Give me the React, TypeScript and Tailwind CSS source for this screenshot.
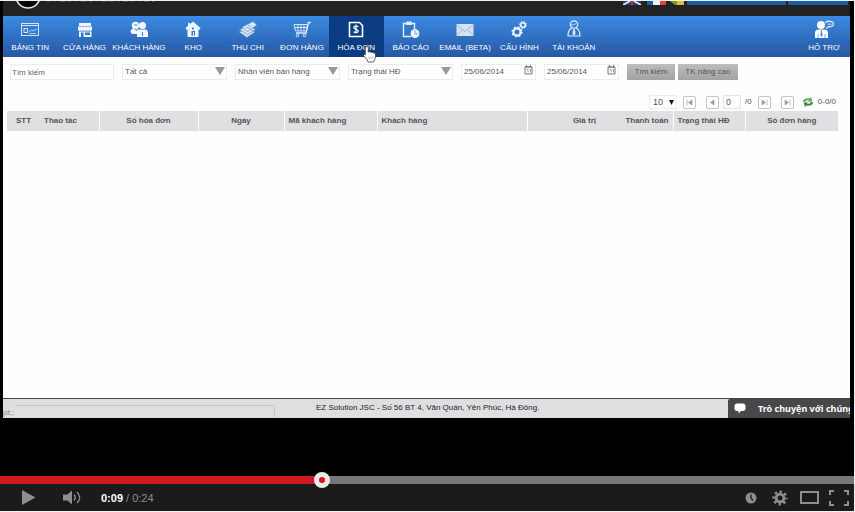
import { useState } from "react";
import type { ReactNode } from "react";
import { clsx } from "clsx";

type NavEntry = { label: string; icon: ReactNode };

const NAV_ITEMS: NavEntry[] = [
  {
    label: "BẢNG TIN",
    icon: (
      <g fill="none" stroke="#d5e6fa">
        <rect x="1.5" y="3.5" width="17" height="12" />
        <path d="M1.5 5.5h17" />
        <rect x="4" y="8.5" width="3.5" height="4" />
        <path d="M9 12l2-2 2 1 4-2M9 13.5h7" strokeWidth="0.8" />
      </g>
    ),
  },
  {
    label: "CỬA HÀNG",
    icon: (
      <g fill="#eef5fd">
        <path d="M4 3h12v3H4zM3 6.5h14v3.2a1.4 1.4 0 0 1-2.8 0 1.4 1.4 0 0 1-2.8 0 1.4 1.4 0 0 1-2.8 0 1.4 1.4 0 0 1-2.8 0 1.4 1.4 0 0 1-2.8 0z" />
        <path fillRule="evenodd" d="M4 11.5h12.5V17H4zM6 12.5V17h2.5v-4.5zM10 12.5V15h5v-2.5z" />
      </g>
    ),
  },
  {
    label: "KHÁCH HÀNG",
    icon: (
      <g fill="#f4f8fe">
        <circle cx="6.5" cy="5.5" r="3.7" />
        <path d="M1.5 12c0-2.500 1.500-3.500 4.500-3.500s4 1.500 4 3.500v2H3z" />
        <circle cx="13.5" cy="5.5" r="3.5" />
        <path d="M9.5 9.5h6.5c2.500 0 3 2 3 4V17H8v-3.500z" />
        <path d="M5 5h3.500M6 9l2.500 1.500M13.500 12v4" fill="none" stroke="#4389dc" strokeWidth="1.2" />
      </g>
    ),
  },
  {
    label: "KHO",
    icon: (
      <g fill="#eef5fd">
        <path fillRule="evenodd" d="M10 1.5l7.5 6.5-1 2-1-.7V17H4.5V9.3l-1 .7-1-2L5 5.8V3h2v1.2zM8.5 11v4.500h3.500V11z" />
        <path d="M9 7.500h2v2H9z" fill="#3f86dc" />
        <path d="M10 12h1v3.5h-1z" />
      </g>
    ),
  },
  {
    label: "THU CHI",
    icon: (
      <g fill="#d9e6f5" stroke="#5c86bd" strokeWidth="0.7">
        <path d="M1 12l9-4 7 4-8 5.5z" />
        <path d="M1.5 9.5l9-4 7 4-8 5z" />
        <path d="M4 7l11-5.5L19 5 9.5 11.5z" />
        <path d="M8 7l4 1.5M10 5l3 2M12 9l3 2" fill="none" stroke="#6f94c2" />
      </g>
    ),
  },
  {
    label: "ĐƠN HÀNG",
    icon: (
      <g fill="none" stroke="#e2edfb">
        <path d="M19 2.5h-2.5L14 13H4" strokeWidth="1.4" />
        <path d="M2 4.5h13.5L14.5 11H3.5zM6 4.5V11M9 4.5V11M12 4.5V11M2.5 7.5H15" strokeWidth="0.9" />
        <circle cx="5.5" cy="15.5" r="1.3" />
        <circle cx="12.5" cy="15.5" r="1.3" />
      </g>
    ),
  },
  {
    label: "HÓA ĐƠN",
    icon: (
      <g fill="none" stroke="#fff">
        <path d="M3.5 2.500h10l3 3v11h-13z" strokeWidth="1.6" />
        <path d="M12.300 7c-1-1.300-4.600-1.300-4.600.600 0 2.200 4.600 1.200 4.600 3.500 0 2-3.700 1.900-4.800.500M10 4.500v9" strokeWidth="1.2" />
      </g>
    ),
  },
  {
    label: "BÁO CÁO",
    icon: (
      <g fill="none" stroke="#e2edfb">
        <path d="M10 16.5H2.5v-13h11V9" strokeWidth="1.4" />
        <path d="M5.5 2h5v2.5h-5z" fill="#e2edfb" />
        <circle cx="14" cy="13.5" r="4" fill="#f4f8fe" stroke="#f4f8fe" />
        <path d="M14 10v3.5h3.5M14 13.5l2 2" stroke="#6c9fdf" strokeWidth="0.8" />
      </g>
    ),
  },
  {
    label: "EMAIL (BETA)",
    icon: (
      <g>
        <path d="M1.500 4h17v12h-17z" fill="#d6e2f0" />
        <path d="M1.500 4.500l8.500 7 8.500-7M1.500 15.500l6-6M18.500 15.500l-6-6" fill="none" stroke="#94b0d2" strokeWidth="0.9" />
      </g>
    ),
  },
  {
    label: "CẤU HÌNH",
    icon: (
      <g fill="none" stroke="#f4f8fe">
        <circle cx="8" cy="12" r="3.6" strokeWidth="2.2" />
        <circle cx="8" cy="12" r="5" strokeWidth="1.2" strokeDasharray="1.96 1.96" />
        <circle cx="14" cy="5" r="2.3" strokeWidth="1.5" />
        <circle cx="14" cy="5" r="3.5" strokeWidth="1" strokeDasharray="1.37 1.37" />
      </g>
    ),
  },
  {
    label: "TÀI KHOẢN",
    icon: (
      <g fill="none" stroke="#e2edfb" strokeWidth="1.2">
        <circle cx="10" cy="4.5" r="3.7" />
        <path d="M8 8c-3 1-4 3-4 8h12c0-5-1-7-4-8" />
        <path d="M7 5c2 0 4-.5 5.500-2" strokeWidth="0.8" />
        <path d="M9.300 9.500h1.400l.5 4.500-1.200 1.500L8.800 14z" fill="#e2edfb" strokeWidth="0.5" />
      </g>
    ),
  },
];

const SUPPORT: NavEntry = {
  label: "HỖ TRỢ",
  icon: (
    <g fill="#fff">
      <circle cx="7" cy="5" r="4" />
      <path d="M1 18v-5c0-2.500 1.500-3.500 4-3.500h5c2.500 0 4 1 4 3.500v5z" />
      <path d="M7.500 10.500l.7 4.500-.7 1.500-.7-1.500zM4 14v4M11 14v4" stroke="#3a7fd8" strokeWidth="0.7" fill="#3a7fd8" />
      <path d="M11.500 2.500c2-2 8-1.500 8 1.500 0 2-2.500 3-5 2.700L12 8.500" fill="none" stroke="#dbe9fa" strokeWidth="1.3" />
      <path d="M13.500 4.200h4" stroke="#dbe9fa" />
    </g>
  ),
};

const FILTERS = [
  { name: "scope", label: "Tất cả" },
  { name: "staff", label: "Nhân viên bán hàng" },
  { name: "status", label: "Trạng thái HĐ" },
];

const COLUMNS = [
  { label: "STT", className: "w-[33px] text-center" },
  { label: "Thao tác", className: "w-[59px] pl-1 text-left" },
  { label: "Số hóa đơn", className: "w-[99px] border-l border-white text-center" },
  { label: "Ngày", className: "w-[86px] border-l border-white text-center" },
  { label: "Mã khách hàng", className: "w-[93px] border-l border-white pl-1 text-left" },
  { label: "Khách hàng", className: "w-[150px] border-l border-white pl-1 text-left" },
  { label: "Giá trị", className: "w-[73px] border-l border-white pr-1 text-right" },
  { label: "Thanh toán", className: "w-[73px] pr-1 text-right" },
  { label: "Trạng thái HĐ", className: "w-[72px] border-l border-white pl-1 text-left" },
  { label: "Số đơn hàng", className: "border-l border-white text-center" },
];

function NavButton({ item, active, onClick }: { item: NavEntry; active?: boolean; onClick?: () => void }) {
  return (
    <button
      type="button"
      onClick={onClick}
      className={clsx(
        "relative flex h-full w-full flex-col items-center pt-1 text-[8px] leading-[12px] whitespace-nowrap text-white",
        active && "bg-[#0b3c81]"
      )}
    >
      <svg viewBox="0 0 20 20" className="h-5 w-5 shrink-0" aria-hidden="true">
        {item.icon}
      </svg>
      <span className="mt-0.5">{item.label}</span>
      {active && (
        <svg viewBox="0 0 13 17" className="absolute top-[30px] left-[34px] h-[17px] w-[13px]" aria-hidden="true">
          <path
            d="M3.500.500C4.700.500 5.300 1.200 5.300 2.200V6l1.500-.300 1.300.700 1.400-.100 1.100.700c1.300 0 1.900.600 1.900 1.700l-.300 3.500L10.500 16H5L4 13.500.800 10c-.600-1.200.600-2 1.500-1.200V2.200C2.200 1.200 2.600.500 3.500.500z"
            fill="#fff"
            stroke="#3a3a3a"
            strokeWidth="0.8"
          />
          <path d="M6.2 10.500V13M8 10.500V13M9.800 10.500V13" stroke="#777" strokeWidth="0.5" />
        </svg>
      )}
    </button>
  );
}

function TopBar() {
  return (
    <header className="flex h-[15px] items-start justify-between bg-[#222] pr-0.5">
      <svg viewBox="0 0 160 12" className="ml-2 h-3 w-40" aria-hidden="true">
        <circle cx="17" cy="-5" r="12" fill="#050505" stroke="#e8e8e8" strokeWidth="1.6" />
        <path d="M36 .5h108" stroke="#4a4a4a" strokeDasharray="3 5 1 4 5 3" />
      </svg>
      <div className="flex gap-0.5">
        <svg viewBox="0 0 62 4" className="h-1 w-[62px]" aria-hidden="true">
          <path d="M0 0h18v4H0z" fill="#28417f" />
          <path d="M0 4L7 0M18 4L11 0" stroke="#eee" strokeWidth="1.6" />
          <path d="M9 0v4" stroke="#d12c3c" strokeWidth="2.5" />
          <path d="M24 0h6v4h-6z" fill="#2059a7" />
          <path d="M30 0h7v4h-7z" fill="#f3f3f3" />
          <path d="M37 0h6v4h-6z" fill="#e0443a" />
          <path d="M47 0h7l2 4h-4z" fill="#7d9b2c" />
          <path d="M54 0h7v4h-7z" fill="#e6b93d" />
        </svg>
        <button type="button" aria-label="Tài khoản" className="h-1 w-[99px] bg-[#1c5ba6]" />
        <button type="button" aria-label="Thoát" className="h-1 w-[60px] bg-[#1c5ba6]" />
      </div>
    </header>
  );
}

function DateField({ label }: { label: string }) {
  return (
    <label className="flex h-4 w-[75px] items-center border border-[#ececec] bg-white">
      <input
        aria-label={label}
        defaultValue="25/06/2014"
        className="w-full min-w-0 pl-0.5 text-[8px] leading-[12px] text-[#555] outline-none"
      />
      <svg viewBox="0 0 9 10" className="mr-0.5 mb-1 h-[10px] w-[9px] shrink-0" aria-hidden="true">
        <path d="M1 2h7v7H1z" fill="#fff" stroke="#777" />
        <path d="M1 2h7M2.5 0v2M6.5 0v2" stroke="#777" />
        <path d="M2.5 4.5H4v3M5.500 4.500h1v3" fill="none" stroke="#777" strokeWidth="0.7" />
      </svg>
    </label>
  );
}

function FilterBar() {
  return (
    <form className="flex items-center gap-2 pt-[7px] pl-[7px]" onSubmit={(e) => e.preventDefault()}>
      <input
        aria-label="Tìm kiếm"
        placeholder="Tìm kiếm"
        className="h-4 w-[104px] border border-[#ececec] pl-px text-[8px] leading-[12px] text-[#555] outline-none placeholder:text-[#666]"
      />
      {FILTERS.map((filter) => (
        <div key={filter.name} className="relative">
          <select
            name={filter.name}
            aria-label={filter.label}
            className="block h-4 w-[105px] appearance-none border border-[#ececec] bg-white pl-0.5 text-[8px] leading-[12px] text-[#555]"
          >
            <option>{filter.label}</option>
          </select>
          <svg viewBox="0 0 10 8" className="pointer-events-none absolute top-[3px] right-0.5 h-2 w-[10px]" aria-hidden="true">
            <path d="M0 0h10L5 8z" fill="#989898" />
          </svg>
        </div>
      ))}
      <DateField label="Từ ngày" />
      <DateField label="Đến ngày" />
      <div className="flex gap-[3px] text-[8px] leading-[12px] text-[#555]">
        <button type="submit" className="h-4 w-12 bg-linear-to-b from-[#bdbdbd] to-[#a3a3a3]">
          Tìm kiếm
        </button>
        <button type="button" className="h-4 w-[60px] bg-linear-to-b from-[#bdbdbd] to-[#a3a3a3]">
          TK nâng cao
        </button>
      </div>
    </form>
  );
}

function PageButton({ label, path }: { label: string; path: string }) {
  return (
    <button type="button" aria-label={label} className="h-[13px] w-[13px] rounded-xs border border-[#c4c4c4] bg-white">
      <svg viewBox="0 0 11 11" className="h-[11px] w-[11px]" aria-hidden="true">
        <path d={path} fill="#999" stroke="#999" strokeWidth="0.6" />
      </svg>
    </button>
  );
}

function Pager() {
  return (
    <div className="mt-[14px] flex h-4 items-center justify-end pr-[14px] text-[8px] leading-[12px] text-[#555]">
      <div className="relative mr-1.5">
        <select aria-label="Số dòng" className="block h-[14px] w-7 appearance-none border border-[#ececec] bg-white pl-[3px] text-[9px] leading-[12px]">
          <option>10</option>
        </select>
        <svg viewBox="0 0 5 5" className="pointer-events-none absolute top-[5px] right-[3px] h-[5px] w-[5px]" aria-hidden="true">
          <path d="M0 0h5L2.5 5z" fill="#111" />
        </svg>
      </div>
      <div className="mr-1 flex gap-[10px]">
        <PageButton label="Trang đầu" path="M3 2.5v6M8 3v5L4.5 5.5z" />
        <PageButton label="Trang trước" path="M7 3v5L3.5 5.5z" />
      </div>
      <input
        aria-label="Trang"
        defaultValue="0"
        className="h-[14px] w-[18px] border border-[#e4e4e4] pl-0.5 text-[9px] leading-[12px] outline-none"
      />
      <span className="mr-1.5 ml-1">/0</span>
      <div className="mr-2 flex gap-[10px]">
        <PageButton label="Trang sau" path="M3 3v5l3.5-2.5zM8 2.5v6" />
        <PageButton label="Trang cuối" path="M3 3v5l3.5-2.5zM8 2.5v6" />
      </div>
      <button type="button" aria-label="Tải lại" className="mr-1">
        <svg viewBox="0 0 12 10" className="h-[10px] w-3" aria-hidden="true">
          <path d="M.5 4.500C1.500 2 4.500.500 7.500 1.500L9 0l1.500 4.500L6 4.800 7 3.300C5 2.800 4 3.500 3 5z" fill="#62ab58" />
          <path d="M11.500 5.500C10.500 8 7.500 9.500 4.500 8.500L3 10 1.500 5.500 6 5.200 5 6.700C7 7.200 8 6.500 9 5z" fill="#3f8c45" />
        </svg>
      </button>
      <span>0-0/0</span>
    </div>
  );
}

function InvoiceTable() {
  return (
    <div className="pt-px pr-3 pl-1">
      <table className="w-full table-fixed text-[8px] leading-[12px] text-[#555]">
        <thead>
          <tr className="h-5 bg-[#e0dfe1]">
            {COLUMNS.map((column) => (
              <th key={column.label} scope="col" className={clsx("font-bold whitespace-nowrap", column.className)}>
                {column.label}
              </th>
            ))}
          </tr>
        </thead>
        <tbody />
      </table>
    </div>
  );
}

function PageFooter() {
  return (
    <footer className="relative flex h-5 border-t border-[#444] bg-[#dfdfe2] text-[8px] leading-[12px]">
      <span className="mt-2 w-3 overflow-hidden whitespace-nowrap text-[#888]">pt;;</span>
      <div className="mt-1.5 w-[260px] rounded-tr-xs border-t border-r border-[#c8c8c8]" />
      <p className="mt-[3px] ml-[41px] whitespace-nowrap text-[#222]">
        EZ Solution JSC - Số 56 BT 4, Văn Quán, Yên Phúc, Hà Đông.
      </p>
      <button
        type="button"
        className="absolute top-0 right-0 flex h-full w-[122px] items-center gap-3 overflow-hidden rounded-tl-xs bg-[#48484a] pl-1.5 font-['Noto_Sans'] text-[9px] font-bold whitespace-nowrap text-white"
      >
        <svg viewBox="0 0 12 11" className="h-[11px] w-3 shrink-0" aria-hidden="true">
          <path d="M3 .5h6c1.500 0 2.500 1 2.500 2.500v2.500C11.500 7 10.500 8 9 8H7l-2.500 2.500V8H3C1.500 8 .5 7 .5 5.500V3C.5 1.500 1.500.5 3 .5z" fill="#fff" />
        </svg>
        Trò chuyện với chúng
      </button>
    </footer>
  );
}

function PlayerControls() {
  const [position, setPosition] = useState(37.7);

  return (
    <div>
      <div className="relative h-2 bg-[#777]">
        <div className="h-full bg-[#cc181e]" style={{ width: `${position}%` }} />
        <div
          className="absolute -top-1 flex h-4 w-4 -translate-x-1/2 items-center justify-center rounded-full bg-[#eaeaea]"
          style={{ left: `${position}%` }}
        >
          <div className="h-1.5 w-1.5 rounded-full bg-[#cc181e]" />
        </div>
        <input
          type="range"
          aria-label="Tua video"
          min={0}
          max={100}
          step={0.1}
          value={position}
          onChange={(e) => setPosition(Number(e.target.value))}
          className="absolute inset-0 h-full w-full cursor-pointer opacity-0"
        />
      </div>
      <div className="flex h-[27px] items-center bg-[#1b1b1b] pr-[5px] pl-[21px] text-[#8e8e8e]">
        <button type="button" aria-label="Phát">
          <svg viewBox="0 0 15 15" className="h-[15px] w-[15px]" aria-hidden="true">
            <path d="M1 0l13.5 7.5L1 15z" fill="currentColor" />
          </svg>
        </button>
        <button type="button" aria-label="Âm lượng" className="ml-[26px]">
          <svg viewBox="0 0 20 15" className="h-[15px] w-5" aria-hidden="true">
            <path d="M1 4.5h4.5L10 .5v14l-4.5-4H1z" fill="currentColor" />
            <path d="M12 4.5c1.500 2 1.500 4 0 6M15 2c3.500 3.500 3.500 7.500 0 11" fill="none" stroke="currentColor" strokeWidth="1.4" />
          </svg>
        </button>
        <p className="ml-[19px] text-[11px] leading-[14px]">
          <span className="font-bold text-white">0:09</span> / 0:24
        </p>
        <div className="ml-auto flex items-center">
          <button type="button" aria-label="Xem sau">
            <svg viewBox="0 0 12 12" className="h-3 w-3" aria-hidden="true">
              <circle cx="6" cy="6" r="5.5" fill="currentColor" />
              <path d="M6 2.5V6l2 2.5" fill="none" stroke="#1b1b1b" strokeWidth="1.3" />
            </svg>
          </button>
          <button type="button" aria-label="Cài đặt" className="ml-[15px]">
            <svg viewBox="0 0 16 16" className="h-4 w-4" aria-hidden="true">
              <circle cx="8" cy="8" r="3.9" fill="none" stroke="currentColor" strokeWidth="2.8" />
              <circle cx="8" cy="8" r="6.3" fill="none" stroke="currentColor" strokeWidth="2.6" strokeDasharray="2.4 2.548" strokeDashoffset="1.2" />
            </svg>
          </button>
          <button type="button" aria-label="Chế độ rộng" className="ml-3">
            <svg viewBox="0 0 19 13" className="h-[13px] w-[19px]" aria-hidden="true">
              <path d="M1 1h17v11H1z" fill="none" stroke="currentColor" strokeWidth="2" />
            </svg>
          </button>
          <button type="button" aria-label="Toàn màn hình" className="ml-2.5">
            <svg viewBox="0 0 20 16" className="h-4 w-5" aria-hidden="true">
              <path d="M1 5V1h4M15 1h4v4M19 11v4h-4M5 15H1v-4" fill="none" stroke="currentColor" strokeWidth="2" />
            </svg>
          </button>
        </div>
      </div>
    </div>
  );
}

export default function App() {
  const [current, setCurrent] = useState("HÓA ĐƠN");

  return (
    <div className="flex h-screen flex-col bg-[#f0f2f2] pt-px pr-px pb-px font-['Liberation_Sans',Arial,sans-serif]">
      <div className="flex flex-1 flex-col bg-black pr-1 pb-[58px] pl-[3px]">
        <TopBar />
        <nav className="flex h-[41px] items-stretch justify-between bg-linear-to-b from-[#3c8ae3] to-[#2658a3]">
          <ul className="grid w-[598px] grid-cols-11">
            {NAV_ITEMS.map((item) => (
              <li key={item.label}>
                <NavButton item={item} active={item.label === current} onClick={() => setCurrent(item.label)} />
              </li>
            ))}
          </ul>
          <div className="w-[52px]">
            <NavButton item={SUPPORT} />
          </div>
        </nav>
        <main className="flex-1 bg-[#fefefe]">
          <FilterBar />
          <Pager />
          <InvoiceTable />
        </main>
        <PageFooter />
      </div>
      <PlayerControls />
    </div>
  );
}
